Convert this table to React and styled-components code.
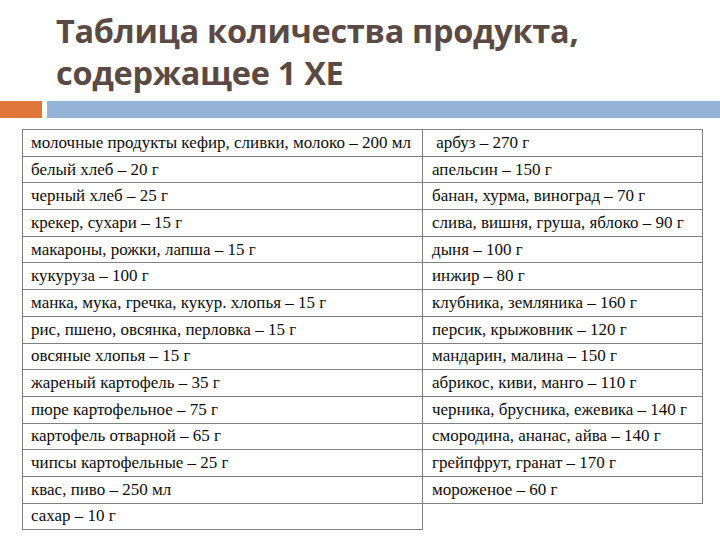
import React from 'react';
import styled, { createGlobalStyle } from 'styled-components';

const rows = [
  ['молочные продукты кефир, сливки, молоко – 200 мл', ' арбуз – 270 г'],
  ['белый хлеб – 20 г', 'апельсин – 150 г'],
  ['черный хлеб – 25 г', 'банан, хурма, виноград – 70 г'],
  ['крекер, сухари – 15 г', 'слива, вишня, груша, яблоко – 90 г'],
  ['макароны, рожки, лапша – 15 г', 'дыня – 100 г'],
  ['кукуруза – 100 г', 'инжир – 80 г'],
  ['манка, мука, гречка, кукур. хлопья – 15 г', 'клубника, земляника – 160 г'],
  ['рис, пшено, овсянка, перловка – 15 г', 'персик, крыжовник – 120 г'],
  ['овсяные хлопья – 15 г', 'мандарин, малина – 150 г'],
  ['жареный картофель – 35 г', 'абрикос, киви, манго – 110 г'],
  ['пюре картофельное – 75 г', 'черника, брусника, ежевика – 140 г'],
  ['картофель отварной – 65 г', 'смородина, ананас, айва – 140 г'],
  ['чипсы картофельные – 25 г', 'грейпфрут, гранат – 170 г'],
  ['квас, пиво – 250 мл', 'мороженое – 60 г'],
  ['сахар – 10 г', null],
];

function App() {
  return (
    <>
      <GlobalStyle />
      <Slide>
        <Title>
          Таблица количества продукта,
          <br />
          содержащее 1 ХЕ
        </Title>
        <Divider>
          <Accent />
          <Rule />
        </Divider>
        <Table>
          <colgroup>
            <col style={{ width: 400 }} />
            <col style={{ width: 280 }} />
          </colgroup>
          <tbody>
            {rows.map(([left, right], i) => (
              <tr key={i}>
                <Cell>{left}</Cell>
                {right !== null && <Cell $right>{right}</Cell>}
              </tr>
            ))}
          </tbody>
        </Table>
      </Slide>
    </>
  );
}

export default App;

const GlobalStyle = createGlobalStyle`
  body {
    margin: 0;
    background: #ffffff;
  }
`;

const Slide = styled.div`
  width: 720px;
  height: 540px;
  overflow: hidden;
  background: #ffffff;
  display: flex;
  flex-direction: column;
`;

const Title = styled.h1`
  margin: 0;
  padding: 10px 0 0 56px;
  font-family: 'Open Sans', 'Noto Sans', sans-serif;
  font-weight: 700;
  font-size: 32.5px;
  line-height: 42px;
  letter-spacing: -0.3px;
  color: #5b4a43;
`;

const Divider = styled.div`
  display: flex;
  gap: 5px;
  height: 17px;
  margin-top: 7px;
`;

const Accent = styled.div`
  width: 42px;
  background: #e0763a;
`;

const Rule = styled.div`
  flex: 1;
  background: #95b3d7;
`;

const Table = styled.table`
  margin: 11px 0 0 22px;
  width: 681px;
  border-collapse: collapse;
  table-layout: fixed;
  font-family: 'Liberation Serif', 'Times New Roman', serif;
  font-size: 17px;
  color: #0d0d0d;
`;

const Cell = styled.td`
  height: 26.7px;
  padding: 0 0 0 ${(p) => (p.$right ? '9px' : '8px')};
  border: 1px solid #7f7f7f;
  white-space: pre;
  vertical-align: middle;
  box-sizing: border-box;
`;
